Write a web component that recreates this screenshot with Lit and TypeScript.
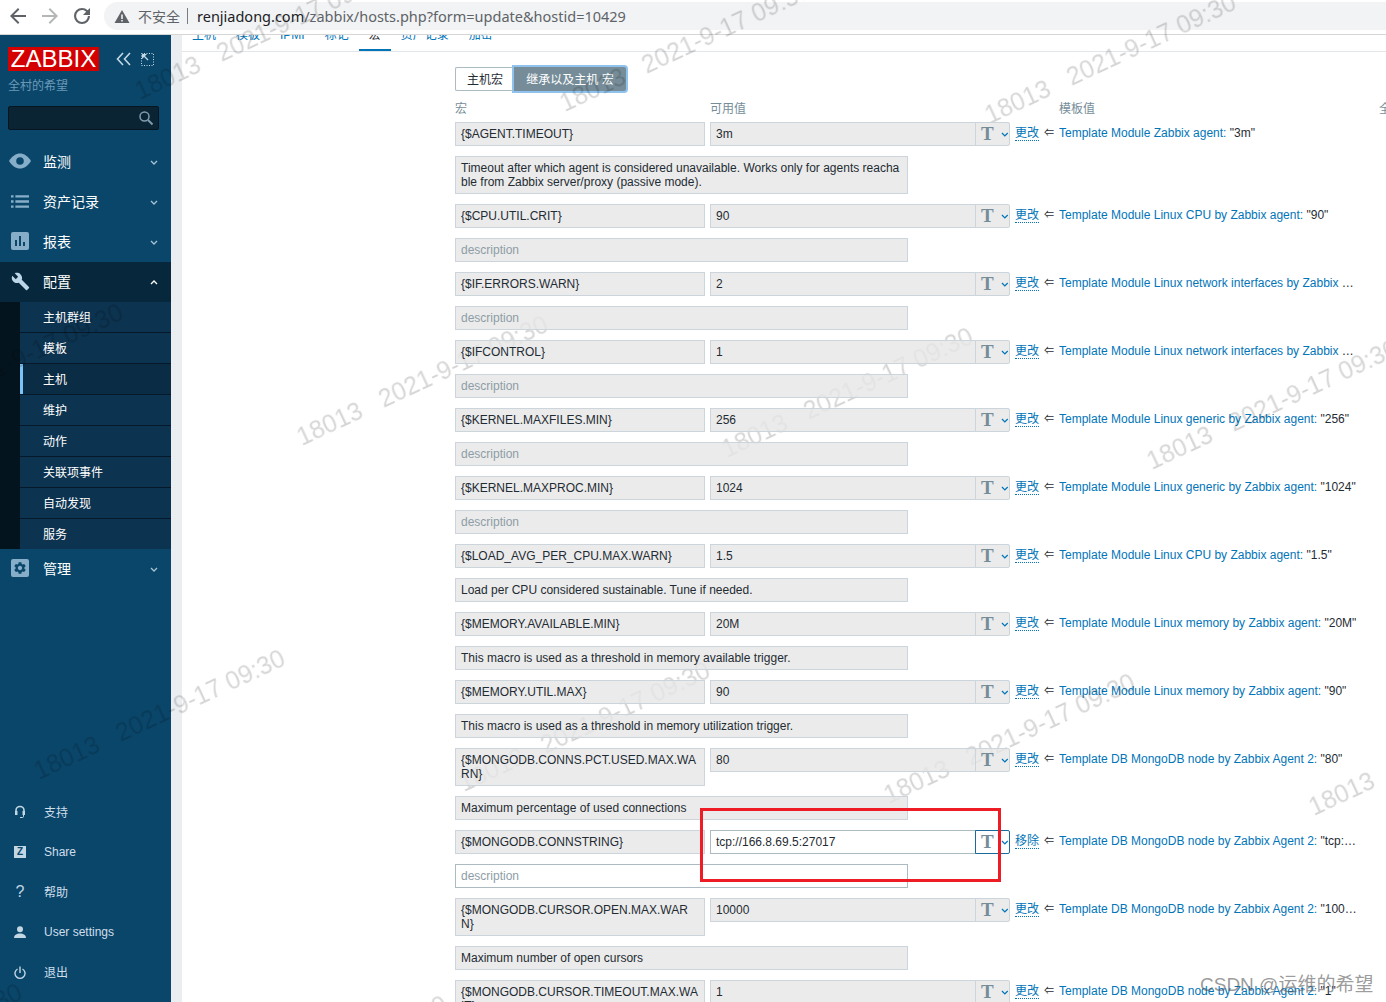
import { LitElement, html, css, svg } from "lit";
import { customElement } from "lit/decorators.js";
import { classMap } from "lit/directives/class-map.js";

const SANS = css`"Liberation Sans", "Noto Sans CJK SC", Arial, sans-serif`;

interface Row { m: string; v: string; t: string; tv: string; d?: string; edit?: boolean; }
const mod = "Template Module ";
const mongo = "Template DB MongoDB node by Zabbix Agent 2: ";
const rows: Row[] = [
  { m: "{$AGENT.TIMEOUT}", v: "3m", t: mod + "Zabbix agent: ", tv: '"3m"', d: "Timeout after which agent is considered unavailable. Works only for agents reachable from Zabbix server/proxy (passive mode)." },
  { m: "{$CPU.UTIL.CRIT}", v: "90", t: mod + "Linux CPU by Zabbix agent: ", tv: '"90"' },
  { m: "{$IF.ERRORS.WARN}", v: "2", t: mod + "Linux network interfaces by Zabbix agent: ", tv: '"2"' },
  { m: "{$IFCONTROL}", v: "1", t: mod + "Linux network interfaces by Zabbix agent: ", tv: '"1"' },
  { m: "{$KERNEL.MAXFILES.MIN}", v: "256", t: mod + "Linux generic by Zabbix agent: ", tv: '"256"' },
  { m: "{$KERNEL.MAXPROC.MIN}", v: "1024", t: mod + "Linux generic by Zabbix agent: ", tv: '"1024"' },
  { m: "{$LOAD_AVG_PER_CPU.MAX.WARN}", v: "1.5", t: mod + "Linux CPU by Zabbix agent: ", tv: '"1.5"', d: "Load per CPU considered sustainable. Tune if needed." },
  { m: "{$MEMORY.AVAILABLE.MIN}", v: "20M", t: mod + "Linux memory by Zabbix agent: ", tv: '"20M"', d: "This macro is used as a threshold in memory available trigger." },
  { m: "{$MEMORY.UTIL.MAX}", v: "90", t: mod + "Linux memory by Zabbix agent: ", tv: '"90"', d: "This macro is used as a threshold in memory utilization trigger." },
  { m: "{$MONGODB.CONNS.PCT.USED.MAX.WARN}", v: "80", t: mongo, tv: '"80"', d: "Maximum percentage of used connections" },
  { m: "{$MONGODB.CONNSTRING}", v: "tcp://166.8.69.5:27017", t: mongo, tv: '"tcp://166.8.69.5:27017"', edit: true },
  { m: "{$MONGODB.CURSOR.OPEN.MAX.WARN}", v: "10000", t: mongo, tv: '"10000"', d: "Maximum number of open cursors" },
  { m: "{$MONGODB.CURSOR.TIMEOUT.MAX.WAIT}", v: "1", t: mongo, tv: '"1"' },
];

const chev = (up = false) => html`<svg class="chev" width="8" height="5" viewBox="0 0 8 5"><path d=${up ? "M1 4l3-3 3 3" : "M1 1l3 3 3-3"} fill="none" stroke="currentColor" stroke-width="1.3"/></svg>`;

const icons: Record<string, unknown> = {
  eye: svg`<path d="M0 8C3 3 7 .5 11 .5S19 3 22 8c-3 5-7 7.500-11 7.500S3 13 0 8z" fill="currentColor"/><circle cx="11" cy="8" r="3.800" fill="#0a466a"/>`,
  list: svg`<path d="M0 1h2.600v2.400H0zM4.500 1h14v2.400h-14zM0 6.300h2.600v2.400H0zM4.500 6.300h14v2.400h-14zM0 11.600h2.600V14H0zM4.500 11.600h14V14h-14z" fill="currentColor"/>`,
  report: svg`<rect x="0" y="0" width="18" height="18" rx="2" fill="currentColor"/><path d="M4 8h2v6H4zM8 4h2v10H8zM12 10h2v4h-2z" fill="#0a466a"/>`,
};

@customElement("app-root")
export class AppRoot extends LitElement {
  static styles = css`
    :host { display: block; width: 1386px; height: 1002px; overflow: hidden; position: relative; font-family: ${SANS}; font-size: 12px; color: #1f2c33; background: #fff; }
    * { box-sizing: border-box; }
    .chrome { height: 35px; border-bottom: 1px solid #d6d6d6; display: flex; align-items: flex-start; background: #fff; }
    .navs { width: 104px; flex: none; display: flex; padding-top: 4px; }
    .navs svg { margin-left: 6px; margin-right: 8px; }
    .navs svg + svg { margin-left: 0; }
    .pill { margin-top: 2px; height: 28px; flex: 1; background: #f1f3f4; border-radius: 14px 0 0 14px; display: flex; align-items: center; padding-left: 10px; font-family: "Noto Sans", "Noto Sans CJK SC", sans-serif; }
    .insecure { color: #5f6368; font-size: 14px; margin-left: 8px; font-family: "Noto Sans CJK SC", sans-serif; }
    .sep { width: 1px; height: 16px; background: #7a7e82; margin: 0 9px 0 7px; }
    .url { font-size: 14.5px; color: #5f6368; white-space: nowrap; }
    .url b { font-weight: 400; color: #202124; }
    .page { display: flex; height: 967px; }
    aside { width: 171px; flex: none; background: #0a466a; color: #fff; display: flex; flex-direction: column; }
    .brand { display: flex; align-items: center; padding: 12px 0 0 8px; }
    .logo { width: 91px; height: 24px; background: #d40000; color: #fff; font-size: 24px; line-height: 24px; text-align: center; }
    .brand svg { color: #c5d8e5; }
    .brand .collapse { margin-left: 17px; }
    .brand .expand { margin-left: 10px; }
    .site { color: #6b9ab8; padding: 8px 0 0 8px; line-height: 14px; height: 23px; font-size: 12px; }
    .search { margin: 12px 0 12px 8px; width: 151px; height: 24px; background: #0b2433; border: 1px solid #06151f; border-radius: 2px; display: flex; justify-content: flex-end; align-items: center; padding-right: 4px; color: #7f9cae; }
    .menu { display: flex; flex-direction: column; }
    .item { height: 40px; display: flex; align-items: center; position: relative; padding-left: 43px; font-size: 14px; color: #fff; }
    .item.cjk { padding-bottom: 2px; }
    .item .ic { position: absolute; left: 0; width: 43px; top: 0; height: 40px; display: flex; align-items: center; padding: 0 0 2px 11px; color: #86aec9; }
    .item .ic.wide { padding-left: 9px; }
    .item .chev { position: absolute; left: 150px; top: 18px; color: #a9c3d5; }
    .item.open { background: #07283c; }
    .item.open .ic { color: #bcd6e8; }
    .item.open .chev { color: #fff; }
    .sub { background: #04141f; padding-left: 20px; display: flex; flex-direction: column; }
    .sub a { height: 31px; border-bottom: 1px solid #05192a; background: #0c3350; color: #fff; padding: 0 0 2px 23px; display: flex; align-items: center; font-size: 12px; position: relative; }
    .sub a:last-child { height: 30px; border-bottom: 0; }
    .sub a.on { background: #0a2c44; }
    .sub a.on::before { content: ""; position: absolute; left: 0; top: 0; bottom: 0; width: 3px; background: #7cc4f8; }
    .spacer { flex: 1; }
    .bottom { padding-bottom: 10px; }
    .bottom .item { font-size: 12px; color: #cfdfea; padding-left: 44px; }
    .bottom .ic { padding: 0 0 0 14px; color: #c2d6e3; }
    .zbox { width: 12px; height: 12px; background: #c2d6e3; color: #0a466a; font-weight: 700; font-size: 10px; line-height: 12px; text-align: center; }
    .qm { width: 12px; text-align: center; font-size: 16px; font-weight: 400; color: #c2d6e3; }
    .gutter { width: 11px; flex: none; background: #ebeef0; }
    main { flex: 1; min-width: 0; overflow: hidden; display: flex; flex-direction: column; }
    .tabs { height: 17px; flex: none; overflow: hidden; border-bottom: 1px solid #e3e7ea; display: flex; align-items: flex-end; }
    .tabs a { padding: 0 10px; color: #0275b8; height: 32px; line-height: 30px; flex: none; border-bottom: 3px solid transparent; margin-bottom: -1px; }
    .tabs a.on { color: #1f2c33; border-bottom-color: #0275b8; }
    .content { padding: 15px 0 0 273px; }
    .seg { display: flex; height: 24px; margin-bottom: 11px; }
    .seg span { display: flex; align-items: center; justify-content: center; height: 24px; padding-bottom: 2px; }
    .seg .a { width: 59px; border: 1px solid #acbbc2; border-right: 0; border-radius: 2px 0 0 2px; }
    .seg .b { width: 112px; background: #768d99; color: #fff; border-radius: 0 2px 2px 0; box-shadow: 0 0 0 2px #8fc3ee; }
    .heads { display: grid; grid-template-columns: 255px 349px 320px 100px; color: #768d99; height: 14px; line-height: 14px; margin-bottom: 6px; white-space: nowrap; }
    .rows { display: flex; flex-direction: column; gap: 10px; }
    .row { display: grid; grid-template-columns: 250px 300px 24px 10px 298px; column-gap: 5px; row-gap: 10px; align-items: start; }
    .field { position: relative; z-index: 2; background: rgba(230,230,230,.8); border: 1px solid #ccd5db; padding: 4px 5px; line-height: 14px; min-height: 24px; word-break: break-all; }
    .field.live { background: rgba(255,255,255,.8); border-color: #acbbc2; }
    .desc { grid-column: 1 / -1; width: 453px; }
    .desc.ph { color: #8d9da6; }
    .val { display: flex; }
    .val .field { flex: 1; min-width: 0; }
    .tbtn { width: 35px; height: 24px; flex: none; margin-left: -1px; background: rgba(230,230,230,.8); border: 1px solid #ccd5db; border-radius: 0 2px 2px 0; display: flex; align-items: center; padding-left: 5px; color: #768d99; position: relative; z-index: 2; }
    .tbtn .tt { font-family: "Liberation Serif", serif; font-weight: 700; font-size: 19px; line-height: 22px; width: 17px; }
    .tbtn .chev { color: #0275b8; margin-left: 4px; }
    .tbtn.live { background: #fff; border-color: #1a6a9c; }
    .act { color: #0275b8; border-bottom: 1px dotted #0275b8; line-height: 14px; margin-top: 4px; height: 15px; white-space: nowrap; }
    .arrow { line-height: 22px; font-size: 10px; text-align: center; }
    .tpl { line-height: 22px; white-space: nowrap; overflow: hidden; text-overflow: ellipsis; color: #1f2c33; }
    .tpl span { color: #0275b8; }
    .marks { position: absolute; inset: 0; z-index: 1; pointer-events: none; overflow: hidden; }
    .mark { position: absolute; font-size: 25px; line-height: 30px; height: 30px; white-space: pre; color: rgba(0,0,0,.16); transform: rotate(-25deg); transform-origin: 0 50%; filter: blur(.4px); }
    .csdn { position: absolute; z-index: 3; left: 1200px; top: 972px; font-size: 19px; line-height: 26px; color: rgba(90,90,90,.62); white-space: nowrap; }
    .redbox { position: absolute; z-index: 3; left: 700px; top: 808px; width: 301px; height: 74px; border: 3px solid #ee1c25; }
  `;

  private marks() {
    const out = [];
    for (let i = -3; i <= 4; i++) for (let j = -2; j <= 3; j++) {
      const x = 298 + i * 425 + j * -263;
      const y = 438 + i * 12 + j * 334;
      if (x < -350 || x > 1386 || y < -60 || y > 1150) continue;
      out.push(html`<div class="mark" style="left:${x}px;top:${y - 15}px">18013   2021-9-17 09:30</div>`);
    }
    return out;
  }

  private item(icon: unknown, label: string, opts: { wide?: boolean; open?: boolean; noChev?: boolean } = {}) {
    const cjk = /[^\x00-\x7f]/.test(label);
    return html`<div class=${classMap({ item: true, open: !!opts.open, cjk })}>
      <span class=${classMap({ ic: true, wide: !!opts.wide })}>${icon}</span>${label}${opts.noChev ? "" : chev(opts.open)}
    </div>`;
  }

  private row(r: Row) {
    const live = !!r.edit;
    return html`<div class="row">
      <div class="field">${r.m}</div>
      <div class="val">
        <div class=${classMap({ field: true, live })}>${r.v}</div>
        <div class=${classMap({ tbtn: true, live })}><span class="tt">T</span>${chev()}</div>
      </div>
      <a class="act">${live ? "移除" : "更改"}</a>
      <div class="arrow">⇐</div>
      <div class="tpl"><span>${r.t}</span>${r.tv}</div>
      <div class=${classMap({ field: true, desc: true, ph: !r.d, live })}>${r.d ?? "description"}</div>
    </div>`;
  }

  render() {
    const ico = (w: number, h: number, vb: string, body: unknown) => html`<svg width=${w} height=${h} viewBox=${vb}>${body}</svg>`;
    return html`
      <div class="chrome">
        <div class="navs">
          <svg width="24" height="24" viewBox="0 0 24 24"><path d="M20 11H7.800l5.600-5.600L12 4l-8 8 8 8 1.400-1.400L7.800 13H20z" fill="#5f6368"/></svg>
          <svg width="24" height="24" viewBox="0 0 24 24"><path d="M4 11h12.200l-5.600-5.600L12 4l8 8-8 8-1.400-1.400 5.600-5.600H4z" fill="#b4b6b8"/></svg>
          <svg width="24" height="24" viewBox="0 0 24 24"><path d="M17.650 6.350A7.960 7.960 0 0012 4a8 8 0 108 8h-2.100A5.900 5.900 0 1112 6.100c1.630 0 3.100.68 4.160 1.740L13 11h7V4z" fill="#5f6368"/></svg>
        </div>
        <div class="pill">
          <svg width="16" height="15" viewBox="0 0 16 15"><path d="M8 1l7.500 13H.5zM7.200 5.500v4.500h1.600V5.500zM7.200 11v1.600h1.600V11z" fill="#5f6368" fill-rule="evenodd"/></svg>
          <span class="insecure">不安全</span><span class="sep"></span>
          <span class="url"><b>renjiadong.com</b>/zabbix/hosts.php?form=update&amp;hostid=10429</span>
        </div>
      </div>
      <div class="page">
        <aside>
          <div class="brand">
            <div class="logo">ZABBIX</div>
            <svg class="collapse" width="15" height="14" viewBox="0 0 15 14"><path d="M7 1L1.500 7 7 13M14 1L8.500 7 14 13" fill="none" stroke="currentColor" stroke-width="1.600"/></svg>
            <svg class="expand" width="13" height="13" viewBox="0 0 13 13"><path d="M.5.500h12v12H.500z" fill="none" stroke="currentColor" stroke-dasharray="1 1.500"/><path d="M1 1h5L1 6z" fill="currentColor"/><path d="M3 3l4 4" stroke="currentColor" stroke-width="1.200"/></svg>
          </div>
          <div class="site">全村的希望</div>
          <div class="search"><svg width="16" height="16" viewBox="0 0 16 16"><circle cx="6.500" cy="6.500" r="4.500" fill="none" stroke="currentColor" stroke-width="1.500"/><path d="M10 10l4.500 4.500" stroke="currentColor" stroke-width="2"/></svg></div>
          <div class="menu">
            ${this.item(ico(22, 16, "0 0 22 16", icons.eye), "监测", { wide: true })}
            ${this.item(ico(18, 15, "0 0 18.500 15", icons.list), "资产记录")}
            ${this.item(ico(18, 18, "0 0 18 18", icons.report), "报表")}
            ${this.item(ico(19, 19, "0 0 24 24", svg`<path d="M22.700 19l-9.100-9.100c.9-2.300.4-5-1.500-6.900-2-2-5-2.400-7.400-1.300L9 6 6 9 1.600 4.700C.4 7.100.9 10.100 2.900 12.100c1.900 1.900 4.600 2.400 6.900 1.500l9.100 9.100c.4.400 1 .4 1.400 0l2.300-2.300c.5-.4.5-1.100.1-1.400z" fill="currentColor"/>`), "配置", { open: true })}
            <div class="sub">
              ${["主机群组", "模板", "主机", "维护", "动作", "关联项事件", "自动发现", "服务"].map((s) => html`<a class=${s === "主机" ? "on" : ""}>${s}</a>`)}
            </div>
            ${this.item(ico(18, 18, "0 0 18 18", svg`<rect width="18" height="18" rx="2" fill="currentColor"/><g transform="translate(1.800 1.800) scale(.6)"><path fill="#0a466a" fill-rule="evenodd" d="M19.140 12.940c.04-.3.06-.61.06-.94 0-.32-.02-.64-.07-.94l2.030-1.580c.18-.14.23-.41.12-.61l-1.920-3.320c-.12-.22-.37-.29-.59-.22l-2.390.96c-.5-.38-1.030-.7-1.620-.94l-.36-2.540c-.04-.24-.24-.41-.48-.41h-3.840c-.24 0-.43.17-.47.41l-.36 2.540c-.59.24-1.130.57-1.620.94l-2.390-.96c-.22-.08-.47 0-.59.22L2.740 8.870c-.12.21-.08.47.12.61l2.030 1.580c-.05.3-.09.63-.09.94s.02.64.07.94l-2.030 1.580c-.18.14-.23.41-.12.61l1.920 3.320c.12.22.37.29.59.22l2.390-.96c.5.38 1.030.7 1.620.94l.36 2.540c.05.24.24.41.48.41h3.840c.24 0 .44-.17.47-.41l.36-2.540c.59-.24 1.130-.56 1.620-.94l2.390.96c.22.08.47 0 .59-.22l1.920-3.320c.12-.22.07-.47-.12-.61l-2.010-1.580zM12 15.600c-1.980 0-3.600-1.620-3.600-3.600s1.620-3.600 3.600-3.600 3.600 1.620 3.600 3.600-1.620 3.600-3.600 3.600z"/></g>`), "管理")}
          </div>
          <div class="spacer"></div>
          <div class="menu bottom">
            ${this.item(ico(12, 14, "0 0 12 14", svg`<path d="M2 8V5.500a4 4 0 018 0V8" fill="none" stroke="currentColor" stroke-width="1.600"/><rect x="1" y="6" width="2.500" height="4" fill="currentColor"/><rect x="8.500" y="6" width="2.500" height="4" fill="currentColor"/><path d="M9.500 10v1.500a1 1 0 01-1 1H6" fill="none" stroke="currentColor"/>`), "支持", { noChev: true })}
            ${this.item(html`<span class="zbox">Z</span>`, "Share", { noChev: true })}
            ${this.item(html`<span class="qm">?</span>`, "帮助", { noChev: true })}
            ${this.item(ico(12, 12, "0 0 12 12", svg`<circle cx="6" cy="3.200" r="3" fill="currentColor"/><path d="M0 12c0-3 2.500-4.500 6-4.500S12 9 12 12z" fill="currentColor"/>`), "User settings", { noChev: true })}
            ${this.item(ico(12, 13, "0 0 12 13", svg`<path d="M3.500 3A5 5 0 108.500 3" fill="none" stroke="currentColor" stroke-width="1.400"/><path d="M6 .5V7" stroke="currentColor" stroke-width="1.400"/>`), "退出", { noChev: true })}
          </div>
        </aside>
        <div class="gutter"></div>
        <main>
          <nav class="tabs">
            ${["主机", "模板", "IPMI", "标记", "宏", "资产记录", "加密"].map((t) => html`<a class=${t === "宏" ? "on" : ""}>${t}</a>`)}
          </nav>
          <div class="content">
            <div class="seg"><span class="a">主机宏</span><span class="b">继承以及主机 宏</span></div>
            <div class="heads"><span>宏</span><span>可用值</span><span>模板值</span><span>全局值</span></div>
            <div class="rows">${rows.map((r) => this.row(r))}</div>
          </div>
        </main>
      </div>
      <div class="redbox"></div>
      <div class="marks">${this.marks()}</div>
      <div class="csdn">CSDN @运维的希望</div>
    `;
  }
}
